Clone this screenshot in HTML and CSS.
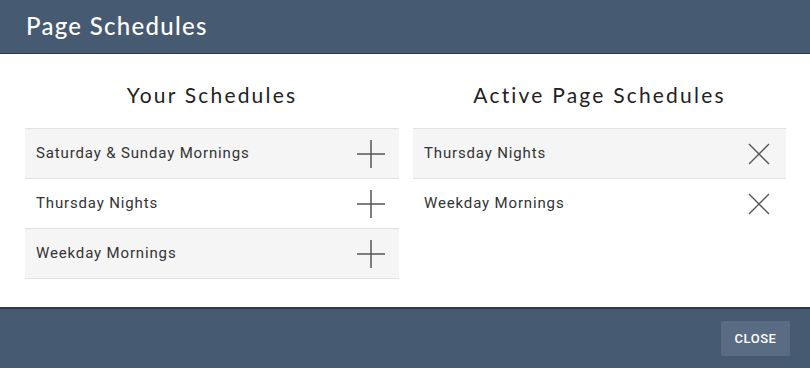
FILE: index.html
```html
<!DOCTYPE html>
<html>
<head>
<meta charset="utf-8">
<link rel="stylesheet" href="styles.css">
</head>
<body>
<div class="modal">
  <header class="modal-header"><h1 class="modal-title">Page Schedules</h1></header>
  <main class="modal-body">
    <section class="column">
      <h2 class="column-title">Your Schedules</h2>
      <ul class="list list-bordered">
        <li class="row"><span class="row-label">Saturday &amp; Sunday Mornings</span>
          <svg class="icon" width="30" height="30" viewBox="0 0 30 30"><path d="M15 1V29M1 15H29" stroke="#555" stroke-width="1.5" fill="none"/></svg></li>
        <li class="row"><span class="row-label">Thursday Nights</span>
          <svg class="icon" width="30" height="30" viewBox="0 0 30 30"><path d="M15 1V29M1 15H29" stroke="#555" stroke-width="1.5" fill="none"/></svg></li>
        <li class="row"><span class="row-label">Weekday Mornings</span>
          <svg class="icon" width="30" height="30" viewBox="0 0 30 30"><path d="M15 1V29M1 15H29" stroke="#555" stroke-width="1.5" fill="none"/></svg></li>
      </ul>
    </section>
    <section class="column">
      <h2 class="column-title">Active Page Schedules</h2>
      <ul class="list">
        <li class="row"><span class="row-label">Thursday Nights</span>
          <svg class="icon icon-x" width="22" height="22" viewBox="0 0 22 22"><path d="M1 1L21 21M21 1L1 21" stroke="#555" stroke-width="1.4" fill="none"/></svg></li>
        <li class="row"><span class="row-label">Weekday Mornings</span>
          <svg class="icon icon-x" width="22" height="22" viewBox="0 0 22 22"><path d="M1 1L21 21M21 1L1 21" stroke="#555" stroke-width="1.4" fill="none"/></svg></li>
      </ul>
    </section>
  </main>
  <footer class="modal-footer"><button class="btn-close">CLOSE</button></footer>
</div>
</body>
</html>
```
FILE: styles.css
```css
html, body { margin: 0; padding: 0; background: #fff; }
body { font-family: Roboto, "Liberation Sans", sans-serif; }
.modal { width: 810px; height: 368px; display: flex; flex-direction: column; }
.modal-header {
  height: 54px; box-sizing: border-box; background: #465a71; border-bottom: 1px solid #2c3847;
  display: flex; align-items: center; padding-left: 26px;
}
.modal-title {
  margin: 0; color: #fff; font-family: Lato, "Noto Sans", sans-serif; font-weight: 500;
  font-size: 24px; letter-spacing: 1.3px; line-height: 1; padding-bottom: 1px;
}
.modal-body {
  flex: 1; display: grid; grid-template-columns: 374px 373px; column-gap: 14px;
  padding: 0 24px 0 25px; align-content: start;
}
.column-title {
  margin: 0; padding: 27px 0 19px; line-height: 28px; text-align: center;
  font-family: Lato, "Noto Sans", sans-serif; font-weight: 400; font-size: 21px;
  letter-spacing: 2.2px; color: #222;
}
.list { list-style: none; margin: 0; padding: 0; }
.list-bordered { border-bottom: 1px solid #e2e2e2; }
.row {
  height: 50px; box-sizing: border-box; border-top: 1px solid #e2e2e2;
  display: flex; align-items: center; justify-content: space-between;
  padding: 0 13px 0 11px;
}
.row:nth-child(odd) { background: #f5f5f5; }
.row-label { font-size: 15px; letter-spacing: 0.85px; color: #333; padding-bottom: 1px; }
.icon { display: block; }
.icon-x { margin-right: 3px; }
.modal-footer {
  height: 61px; box-sizing: border-box; background: #465a71; border-top: 2px solid #2c3847;
  display: flex; justify-content: flex-end; align-items: flex-start; padding: 12px 20px 0 0;
}
.btn-close {
  width: 69px; height: 35px; border: none; border-radius: 2px; background: #5a6c84;
  color: #fff; font-family: Roboto, "Liberation Sans", sans-serif; font-weight: 500;
  font-size: 13px; letter-spacing: 0.5px; padding: 0;
}
```
